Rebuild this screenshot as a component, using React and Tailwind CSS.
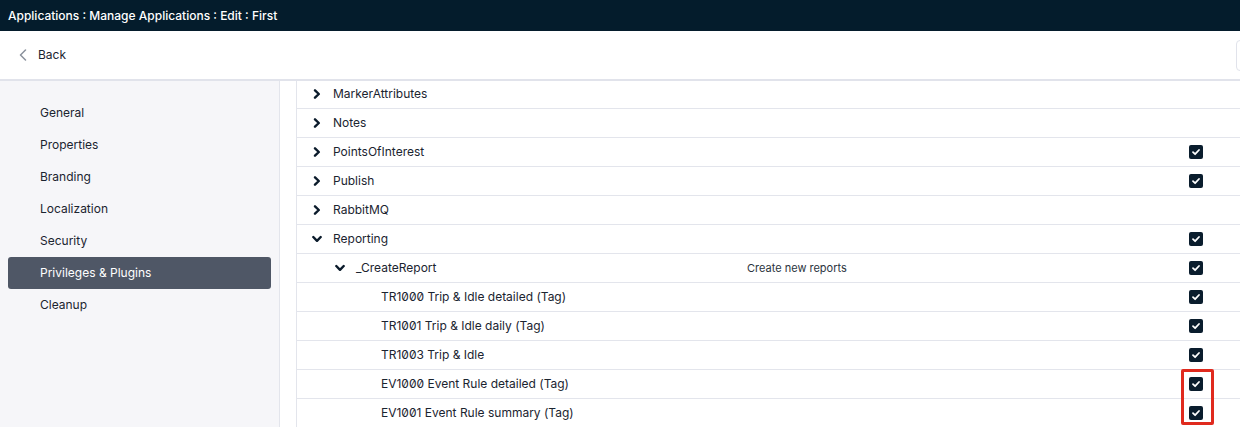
import React from "react";

const navItems = [
  "General",
  "Properties",
  "Branding",
  "Localization",
  "Security",
  "Privileges & Plugins",
  "Cleanup",
];

const rows = [
  { label: "MarkerAttributes", level: 0, open: false, checked: false },
  { label: "Notes", level: 0, open: false, checked: false },
  { label: "PointsOfInterest", level: 0, open: false, checked: true },
  { label: "Publish", level: 0, open: false, checked: true },
  { label: "RabbitMQ", level: 0, open: false, checked: false },
  { label: "Reporting", level: 0, open: true, checked: true },
  { label: "_CreateReport", level: 1, open: true, checked: true, desc: "Create new reports" },
  { label: "TR1000 Trip & Idle detailed (Tag)", level: 2, checked: true },
  { label: "TR1001 Trip & Idle daily (Tag)", level: 2, checked: true },
  { label: "TR1003 Trip & Idle", level: 2, checked: true },
  { label: "EV1000 Event Rule detailed (Tag)", level: 2, checked: true },
  { label: "EV1001 Event Rule summary (Tag)", level: 2, checked: true },
];

const Chevron = ({ open }) => (
  <svg
    width="10"
    height="10"
    viewBox="0 0 10 10"
    className={open ? "rotate-90" : ""}
  >
    <path
      d="M3 1.3 L6.8 5 L3 8.7"
      fill="none"
      stroke="#0b1b2b"
      strokeWidth="2.4"
      strokeLinecap="round"
      strokeLinejoin="round"
    />
  </svg>
);

const Checkbox = () => (
  <span className="flex h-[14px] w-[14px] items-center justify-center rounded-[2px] bg-[#0a1d2d]">
    <svg width="10" height="10" viewBox="0 0 10 10">
      <path
        d="M2 5.2 L4.1 7.2 L8 3"
        fill="none"
        stroke="white"
        strokeWidth="1.8"
        strokeLinecap="round"
        strokeLinejoin="round"
      />
    </svg>
  </span>
);

// text start per level: 333, 356, 381 (list starts at 297)
const indent = ["pl-[15px]", "pl-[38px]", "pl-[84px]"];
const labelWidth = ["w-[413px]", "w-[391px]", "w-[365px]"];

export default function App() {
  return (
    <div className="relative flex h-[427px] w-[1240px] flex-col overflow-hidden bg-white font-['Inter',sans-serif] text-[12px] text-[#1b2430] [font-feature-settings:'zero']">
      <div className="flex h-[31px] shrink-0 items-center bg-[#041c2c] px-2 text-[12px] font-medium text-white">
        Applications : Manage Applications : Edit : First
      </div>
      <div className="flex h-[50px] shrink-0 items-center justify-between border-b-2 border-[#e1e3eb]">
        <div className="flex items-center gap-[11px] pl-[19px]">
          <svg width="8" height="12" viewBox="0 0 8 12">
            <path
              d="M6.5 1 L1.5 6 L6.5 11"
              fill="none"
              stroke="#8a919c"
              strokeWidth="1.5"
              strokeLinecap="round"
              strokeLinejoin="round"
            />
          </svg>
          <span>Back</span>
        </div>
        <div className="h-[31px] w-[8px] translate-x-[4px] rounded-l-[4px] border border-[#e1e3eb]" />
      </div>
      <div className="flex min-h-0 flex-1">
        <aside className="w-[280px] shrink-0 border-r border-[#e3e5ec] bg-[#f6f6f9] px-2 pt-4">
          {navItems.map((item) => (
            <div
              key={item}
              className={`flex h-[32px] items-center rounded-[3px] pl-8 ${
                item === "Privileges & Plugins"
                  ? "bg-[#4f5766] text-white"
                  : "text-[#1b2430]"
              }`}
            >
              {item}
            </div>
          ))}
        </aside>
        <main className="min-w-0 flex-1 overflow-hidden pl-4">
          <div className="-mt-[1px] border-l border-[#e3e5ec]">
            {rows.map((row) => (
              <div
                key={row.label}
                className={`flex h-[29px] items-center border-b border-[#e3e5ec] ${indent[row.level]}`}
              >
                {row.level < 2 && (
                  <span className="mr-[11px] flex w-[10px] items-center">
                    <Chevron open={row.open} />
                  </span>
                )}
                <span
                  className={`shrink-0 whitespace-nowrap ${labelWidth[row.level]}`}
                >
                  {row.label}
                </span>
                <span className="flex-1 whitespace-nowrap text-[11px] text-[#2b3440]">
                  {row.desc || ""}
                </span>
                <span className="mr-[37px] flex w-[14px] items-center justify-center">
                  {row.checked && <Checkbox />}
                </span>
              </div>
            ))}
          </div>
        </main>
      </div>
      <div className="pointer-events-none absolute left-[1181px] top-[369px] h-[56px] w-[33px] rounded-[2px] border-[3px] border-[#e02a1e]" />
    </div>
  );
}
